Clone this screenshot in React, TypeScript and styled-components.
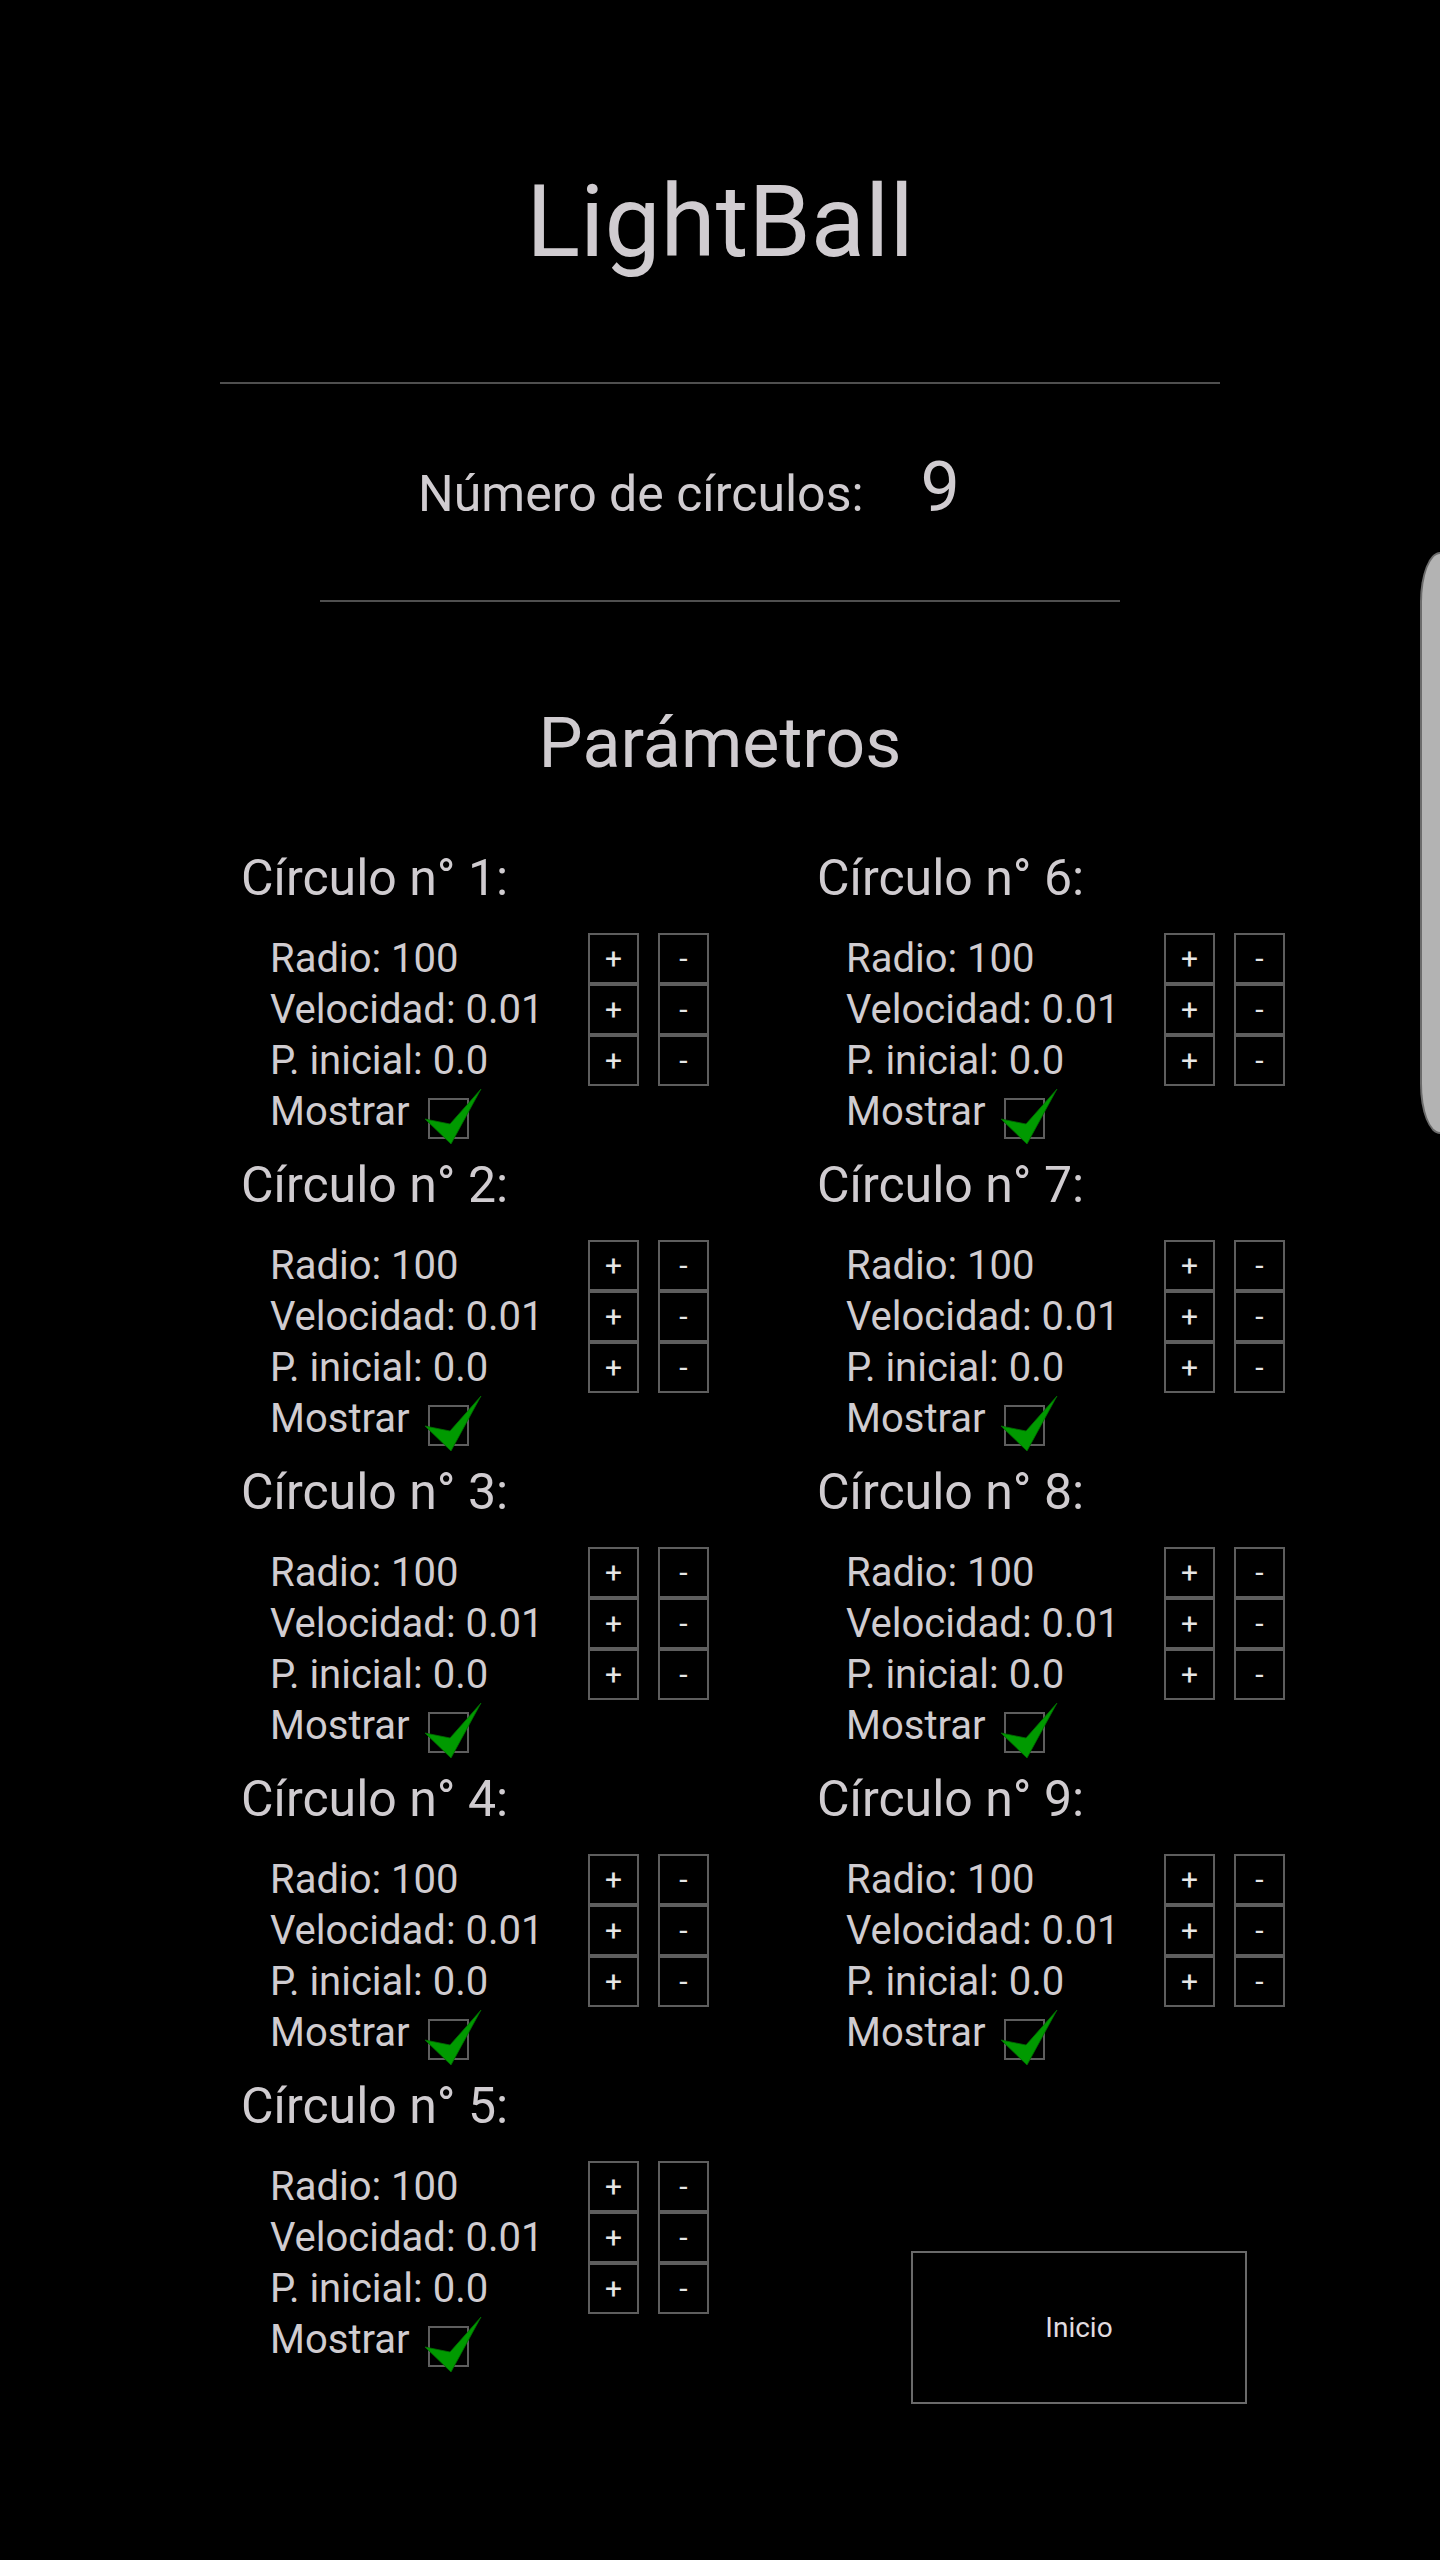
import styled, { createGlobalStyle } from "styled-components";

const GlobalStyle = createGlobalStyle`
  html, body {
    margin: 0;
    padding: 0;
    background-color: #000;
  }
  body {
    font-family: Roboto, "Liberation Sans", sans-serif;
    color: #d0ccd0;
  }
  #root {
    min-height: 2560px;
  }
`;

const circles = [1, 2, 3, 4, 5, 6, 7, 8, 9];
const params = ["Radio: 100", "Velocidad: 0.01", "P. inicial: 0.0"];

const Page = styled.div`
  position: relative;
  width: 1440px;
  min-height: 2560px;
  overflow: hidden;
`;

const Header = styled.div`
  width: 1000px;
  margin: 0 auto;
  display: flex;
  flex-direction: column;
  align-items: center;
`;

const Title = styled.h1`
  margin: 162px 0 0;
  font-size: 100px;
  line-height: 120px;
  font-weight: 400;
`;

const Divider = styled.hr<{ $width: number; $gap: number }>`
  width: ${(p) => p.$width}px;
  height: 2px;
  margin: ${(p) => p.$gap}px 0 0;
  border: none;
  background-color: #4f4f4f;
`;

const CountRow = styled.div`
  margin: 68px 62px 0 0;
  display: flex;
  align-items: baseline;
  gap: 57px;
  line-height: 70px;
`;

const CountLabel = styled.span`
  font-size: 50px;
`;

const CountValue = styled.span`
  font-size: 70px;
`;

const Subtitle = styled.h2`
  margin: 99px 0 0;
  font-size: 70px;
  line-height: 84px;
  font-weight: 400;
`;

const Grid = styled.div`
  margin: 63px 0 0 241px;
  display: grid;
  grid-template-columns: 576px 576px;
`;

const Column = styled.div`
  display: flex;
  flex-direction: column;
`;

const Section = styled.div`
  height: 307px;
`;

const Heading = styled.div`
  font-size: 50px;
  line-height: 60px;
`;

const Rows = styled.div`
  margin: 25px 0 0 29px;
`;

const Row = styled.div`
  display: flex;
  align-items: flex-start;
  height: 51px;
  font-size: 40px;
  line-height: 51px;
`;

const Label = styled.span`
  width: 318px;
`;

const StepButton = styled.button<{ $gap?: boolean }>`
  box-sizing: border-box;
  width: 51px;
  height: 51px;
  margin-left: ${(p) => (p.$gap ? "19px" : "0")};
  padding: 0;
  background: transparent;
  border: 2px solid #5e5e5e;
  color: #e6e6e6;
  font-family: Roboto, "Liberation Sans", sans-serif;
  font-size: 30px;
  line-height: 45px;
`;

const CheckWrap = styled.span`
  position: relative;
  box-sizing: border-box;
  width: 41px;
  height: 41px;
  margin: 12px 0 0 18px;
  border: 2px solid #5e5e5e;
`;

const CheckMark = styled.svg`
  position: absolute;
  left: -8px;
  top: -13px;
  width: 60px;
  height: 60px;
  overflow: visible;
`;

const StartButton = styled.button`
  box-sizing: border-box;
  width: 336px;
  height: 153px;
  margin: 175px 0 0 94px;
  background: transparent;
  border: 2px solid #6a6a6a;
  color: #e0dce0;
  font-family: Roboto, "Liberation Sans", sans-serif;
  font-size: 28px;
`;

const EdgeHandle = styled.div`
  position: absolute;
  right: 0;
  top: 552px;
  width: 18px;
  height: 578px;
  background-color: #b3b3b3;
  border: 2px solid #6c6c6c;
  border-right: none;
  border-radius: 20px 0 0 20px / 50px 0 0 50px;
`;

const Circle = ({ n }: { n: number }) => (
  <Section>
    <Heading>Círculo n° {n}:</Heading>
    <Rows>
      {params.map((p) => (
        <Row key={p}>
          <Label>{p}</Label>
          <StepButton>+</StepButton>
          <StepButton $gap>-</StepButton>
        </Row>
      ))}
      <Row>
        Mostrar
        <CheckWrap>
          <CheckMark viewBox="0 0 60 60">
            <polygon
              points="3,32 28,37 59,2 29,57"
              fill="#009a00"
              stroke="#006b00"
              strokeWidth="0.8"
            />
          </CheckMark>
        </CheckWrap>
      </Row>
    </Rows>
  </Section>
);

export default function App() {
  return (
    <Page>
      <GlobalStyle />
      <Header>
        <Title>LightBall</Title>
        <Divider $width={1000} $gap={100} />
        <CountRow>
          <CountLabel>Número de círculos:</CountLabel>
          <CountValue>9</CountValue>
        </CountRow>
        <Divider $width={800} $gap={71} />
        <Subtitle>Parámetros</Subtitle>
      </Header>
      <Grid>
        <Column>
          {circles.slice(0, 5).map((n) => (
            <Circle key={n} n={n} />
          ))}
        </Column>
        <Column>
          {circles.slice(5).map((n) => (
            <Circle key={n} n={n} />
          ))}
          <StartButton>Inicio</StartButton>
        </Column>
      </Grid>
      <EdgeHandle />
    </Page>
  );
}
